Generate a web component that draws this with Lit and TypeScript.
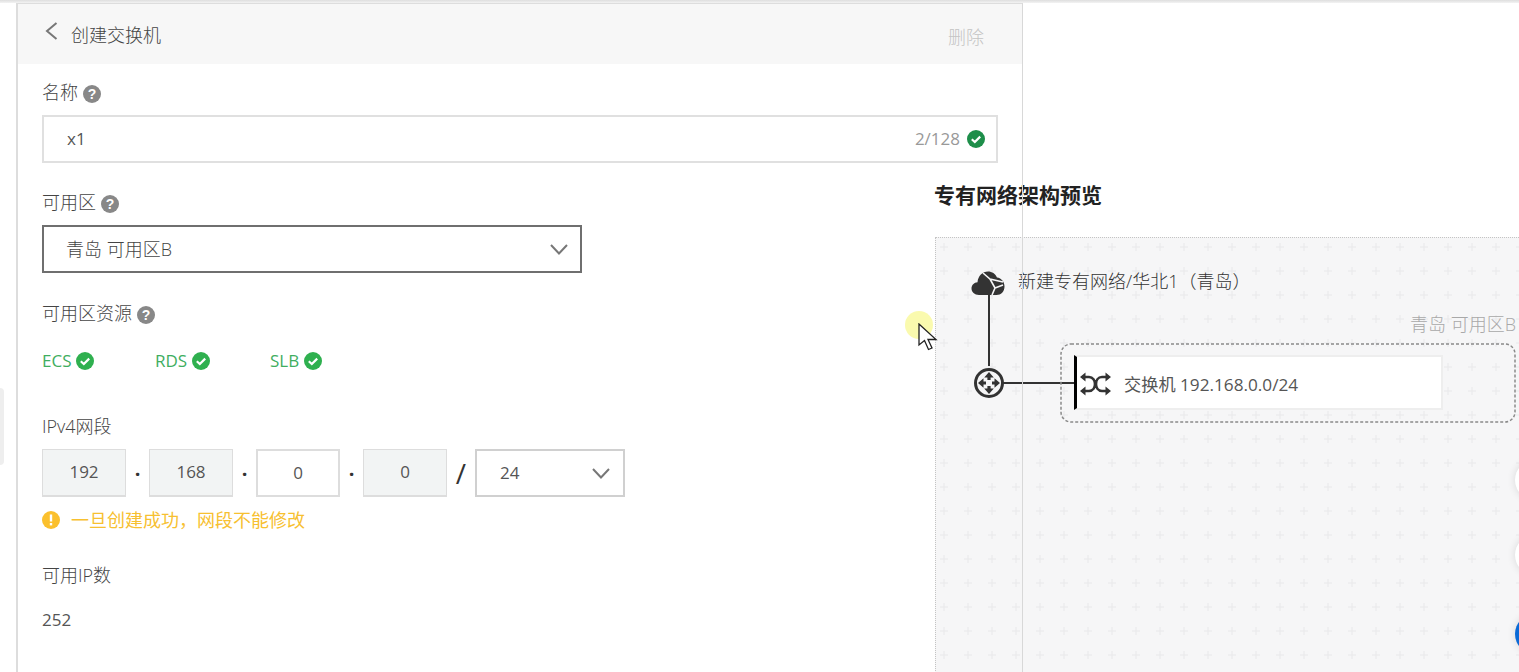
import { LitElement, html, css, svg } from 'lit';
import { customElement } from 'lit/decorators.js';

const helpIcon = html`<svg class="help" viewBox="0 0 18 18" width="18" height="18">
  <circle cx="9" cy="9" r="9" fill="#888"></circle>
  <text x="9" y="14" text-anchor="middle" font-size="14" font-weight="700" fill="#fff" font-family="Liberation Sans, sans-serif">?</text>
</svg>`;

const checkIcon = (color: string) => html`<svg viewBox="0 0 18 18" width="18" height="18">
  <circle cx="9" cy="9" r="9" fill=${color}></circle>
  <polyline points="4.8,9.3 7.8,12 13.2,6.6" fill="none" stroke="#fff" stroke-width="2.2"></polyline>
</svg>`;

const chevron = html`<svg viewBox="0 0 18 11" width="18" height="11">
  <polyline points="1,1 9,9.5 17,1" fill="none" stroke="#777" stroke-width="2"></polyline>
</svg>`;

const arrow = (rotate: number) => svg`<polygon transform="rotate(${rotate} 15 15)" points="15,4 19.8,9.5 16.6,9.5 16.6,12 13.4,12 13.4,9.5 10.200,9.5" fill="#333"></polygon>`;

const resources = ['ECS', 'RDS', 'SLB'];

@customElement('app-root')
export class AppRoot extends LitElement {
  static styles = css`
    :host {
      display: block;
      position: relative;
      height: 672px;
      overflow: hidden;
      background: #fff;
      font-family: "Open Sans", "Noto Sans CJK SC", sans-serif;
      font-size: 18px;
      font-weight: 300;
      color: #444;
    }
    .topbar {
      height: 3px;
      background: linear-gradient(#dedede, #f3f3f3);
    }
    .panel {
      position: relative;
      z-index: 1;
      box-sizing: border-box;
      width: 1007px;
      height: 669px;
      margin-left: 16px;
      border-left: 2px solid #ddd;
      border-right: 1px solid #d8d8d8;
      border-top: 1px solid #ddd;
    }
    .head {
      display: flex;
      align-items: center;
      height: 60px;
      background: #f7f7f7;
      padding: 0 38px 0 27px;
    }
    .head .title {
      margin-left: 12px;
      flex: 1;
    }
    .head .del {
      color: #c4c4c4;
      padding-top: 4px;
    }
    .back {
      margin-top: -6px;
    }
    .body {
      padding: 16px 0 0 24px;
    }
    .label {
      display: flex;
      align-items: center;
      gap: 5px;
      height: 24px;
      line-height: 24px;
    }
    .help {
      margin-top: 4px;
    }
    .box {
      box-sizing: border-box;
      display: flex;
      align-items: center;
      height: 48px;
      padding: 0 11px 0 22px;
      border: 2px solid #e0e0e0;
      background: #fff;
    }
    .box > div {
      margin-top: -2px;
    }
    .name {
      width: 956px;
      margin-top: 11px;
    }
    .name .value {
      flex: 1;
      padding-left: 1px;
      font-size: 17px;
      font-weight: 400;
      color: #555;
    }
    .name .count {
      font-size: 17px;
      font-weight: 400;
      color: #999;
      margin-right: 7px;
    }
    .zone {
      width: 540px;
      margin-top: 11px;
      padding-right: 12px;
      justify-content: space-between;
      border-color: #6f6f6f;
    }
    .gap-zone {
      margin-top: 27px;
    }
    .gap-res {
      margin-top: 28px;
    }
    .res-row {
      display: flex;
      margin-top: 23px;
      height: 24px;
      color: #3fae5f;
    }
    .res {
      display: flex;
      align-items: center;
      gap: 5px;
      font-size: 17px;
      font-weight: 400;
    }
    .res svg {
      margin-top: 2px;
    }
    .res:nth-child(1) {
      width: 113px;
    }
    .res:nth-child(2) {
      width: 115px;
    }
    .gap-ip {
      margin-top: 42px;
    }
    .ip-row {
      display: flex;
      align-items: center;
      margin-top: 11px;
    }
    .cell {
      box-sizing: border-box;
      width: 84px;
      height: 48px;
      display: flex;
      align-items: center;
      justify-content: center;
      padding-bottom: 2px;
      font-size: 17px;
      font-weight: 400;
      color: #555;
      background: #f2f4f4;
      border: 1px solid #ddd;
      border-bottom-width: 2px;
    }
    .cell.edit {
      background: #fff;
      border: 2px solid #ddd;
    }
    .dot {
      width: 23px;
      text-align: center;
      font-size: 20px;
      font-weight: 700;
      color: #333;
    }
    .slash {
      width: 28px;
      text-align: center;
      font-size: 28px;
      font-weight: 400;
      color: #333;
    }
    .mask {
      width: 150px;
      padding: 0 13px 0 23px;
      justify-content: space-between;
      border-color: #d0d0d0;
      font-size: 17px;
      font-weight: 400;
      color: #555;
    }
    .warn {
      display: flex;
      align-items: center;
      gap: 11px;
      height: 24px;
      margin-top: 10px;
      color: #f7c030;
      font-weight: 400;
    }
    .warn svg {
      margin-top: 2px;
    }
    .gap-count {
      margin-top: 32px;
    }
    .count-val {
      margin-top: 21px;
      height: 24px;
      line-height: 24px;
      font-size: 17px;
      font-weight: 400;
      color: #555;
    }
    .preview-title {
      position: absolute;
      left: 934px;
      top: 181px;
      font-size: 21px;
      line-height: 28px;
      font-weight: 700;
      color: #222;
    }
    .canvas {
      position: absolute;
      left: 935px;
      top: 237px;
      width: 640px;
      height: 480px;
      box-sizing: border-box;
      border: 1px dotted #c4c4c4;
      background: #f6f6f7;
      font-size: 18px;
    }
    .canvas > * {
      position: absolute;
    }
    .grid {
      left: 0;
      top: 0;
      width: 100%;
      height: 100%;
    }
    .vpc-text {
      left: 82px;
      top: 31px;
      line-height: 24px;
      white-space: nowrap;
      color: #333;
    }
    .link-v {
      left: 52px;
      top: 56px;
      width: 2px;
      height: 72px;
      background: #333;
    }
    .link-h {
      left: 67px;
      top: 144px;
      width: 72px;
      height: 2px;
      background: #333;
    }
    .zone-label {
      left: 474px;
      top: 74px;
      line-height: 24px;
      color: #a8a8a8;
      white-space: nowrap;
    }
    .zone-box {
      left: 124px;
      top: 105px;
    }
    .card {
      box-sizing: border-box;
      display: flex;
      align-items: center;
      left: 138px;
      top: 117px;
      width: 369px;
      height: 55px;
      padding-left: 2px;
      background: #fff;
      border: 2px solid #eee;
      border-left: 3px solid #000;
    }
    .card svg {
      margin-top: 2px;
    }
    .card span {
      margin-left: 12px;
      padding-top: 2px;
      font-size: 17.2px;
      font-weight: 400;
      color: #555;
    }
    .side-tab {
      position: absolute;
      left: 0;
      top: 388px;
      width: 4px;
      height: 77px;
      background: #eee;
      border-radius: 0 4px 4px 0;
    }
    .fab {
      position: absolute;
      z-index: 2;
      left: 1515px;
      width: 40px;
      height: 40px;
      border-radius: 50%;
      background: #fff;
      box-shadow: 0 0 8px rgba(0, 0, 0, 0.12);
    }
    .fab.blue {
      background: #0a6ad6;
    }
    .halo {
      position: absolute;
      z-index: 3;
      left: 905px;
      top: 311px;
      width: 28px;
      height: 28px;
      border-radius: 50%;
      background: rgba(250, 250, 165, 0.9);
    }
    .cursor {
      position: absolute;
      z-index: 4;
      left: 918px;
      top: 323px;
    }
  `;

  render() {
    return html`
      <div class="topbar"></div>

      <div class="preview-title">专有网络架构预览</div>
      <div class="canvas">
        <svg class="grid">
          <defs>
            <pattern id="plus" x="-4" y="-3" width="24" height="24" patternUnits="userSpaceOnUse">
              <path d="M12 8v8M8 12h8" stroke="#e8e8ea" stroke-width="1" fill="none"></path>
            </pattern>
          </defs>
          <rect width="100%" height="100%" fill="url(#plus)"></rect>
        </svg>

        <div class="link-v"></div>
        <div class="link-h"></div>
        <svg style="left:35px;top:32px" width="34" height="26" viewBox="0 0 34 26">
          <path d="M8 25C3.500 25 .5 22 .5 18.500C.5 15 3 12.500 6.500 12.200C7 6 11.500 1.500 17 1.500C21 1.500 24.500 3.800 26 7.500C30.500 8 33.500 12 33.500 16.500C33.500 21.500 30 25 25.500 25Z" fill="#333"></path>
          <path d="M12 3L19 9L32 12M19 9L24 18L32 15M24 18L21 25" stroke="#f6f6f7" stroke-width="1.600" fill="none"></path>
        </svg>
        <div class="vpc-text">新建专有网络/华北1（青岛）</div>
        <svg style="left:38px;top:130px" width="30" height="30" viewBox="0 0 30 30">
          <circle cx="15" cy="15" r="13.500" fill="#f6f6f7" stroke="#333" stroke-width="3"></circle>
          ${arrow(0)} ${arrow(180)} ${arrow(90)} ${arrow(270)}
        </svg>
        <div class="zone-label">青岛 可用区B</div>
        <svg class="zone-box" width="456" height="80" viewBox="0 0 456 80">
          <rect x="1" y="1" width="454" height="78" rx="10" fill="none" stroke="#8a8a8a" stroke-width="1.500" stroke-dasharray="3 2"></rect>
        </svg>
        <div class="card">
          <svg width="33" height="24" viewBox="0 0 33 24">
            <path d="M5 5H10C18 5 18 19 10 19H5M28 5H23C15 5 15 19 23 19H28" fill="none" stroke="#333" stroke-width="2.600"></path>
            <path d="M6.500 .5L1 5L6.500 9.500ZM6.500 14.500L1 19L6.500 23.500ZM26.500 .5L32 5L26.500 9.500ZM26.500 14.500L32 19L26.500 23.500Z" fill="#333"></path>
          </svg>
          <span>交换机 192.168.0.0/24</span>
        </div>
      </div>

      <div class="panel">
        <div class="head">
          <svg class="back" width="14" height="18" viewBox="0 0 14 18">
            <polyline points="11.500,1 2,9 11.500,17" fill="none" stroke="#777" stroke-width="2"></polyline>
          </svg>
          <div class="title">创建交换机</div>
          <div class="del">删除</div>
        </div>
        <div class="body">
          <div class="label">名称 ${helpIcon}</div>
          <div class="box name">
            <div class="value">x1</div>
            <div class="count">2/128</div>
            ${checkIcon('#1e8e4a')}
          </div>

          <div class="label gap-zone">可用区 ${helpIcon}</div>
          <div class="box zone"><div>青岛 可用区B</div>${chevron}</div>

          <div class="label gap-res">可用区资源 ${helpIcon}</div>
          <div class="res-row">
            ${resources.map((r) => html`<div class="res">${r} ${checkIcon('#2fb04f')}</div>`)}
          </div>

          <div class="label gap-ip">IPv4网段</div>
          <div class="ip-row">
            <div class="cell">192</div>
            <div class="dot">·</div>
            <div class="cell">168</div>
            <div class="dot">·</div>
            <div class="cell edit">0</div>
            <div class="dot">·</div>
            <div class="cell">0</div>
            <div class="slash">/</div>
            <div class="box mask"><div>24</div>${chevron}</div>
          </div>
          <div class="warn">
            <svg width="18" height="18" viewBox="0 0 18 18">
              <circle cx="9" cy="9" r="9" fill="#fbc02d"></circle>
              <rect x="7.800" y="3.500" width="2.400" height="7" fill="#fff"></rect>
              <rect x="7.800" y="12" width="2.400" height="2.400" fill="#fff"></rect>
            </svg>
            <div>一旦创建成功，网段不能修改</div>
          </div>

          <div class="label gap-count">可用IP数</div>
          <div class="count-val">252</div>
        </div>
      </div>

      <div class="side-tab"></div>
      <div class="fab" style="top:460px"></div>
      <div class="fab" style="top:535px"></div>
      <div class="fab blue" style="top:614px"></div>
      <div class="halo"></div>
      <svg class="cursor" width="20" height="28" viewBox="0 0 20 28">
        <path d="M1 1V22L6.500 17.500L10.500 26.500L14 25L10 16.500H18Z" fill="#fff" stroke="#222" stroke-width="1.300"></path>
      </svg>
    `;
  }
}

declare global {
  interface HTMLElementTagNameMap {
    'app-root': AppRoot;
  }
}
